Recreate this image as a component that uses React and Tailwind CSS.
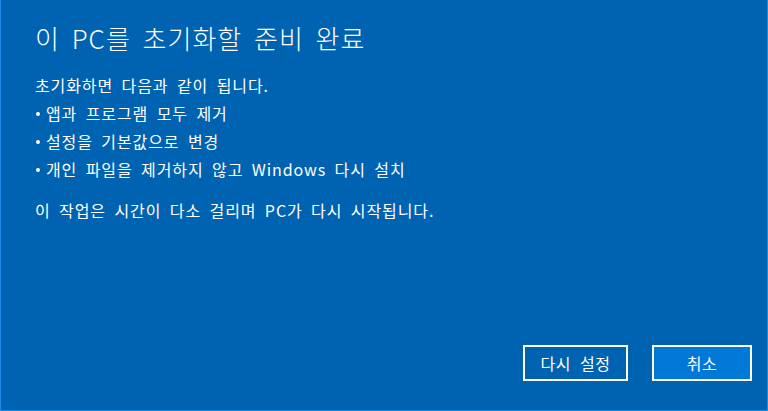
export default function App() {
  const items = [
    "앱과 프로그램 모두 제거",
    "설정을 기본값으로 변경",
    "개인 파일을 제거하지 않고 Windows 다시 설치",
  ];
  return (
    <div
      className="w-[768px] h-[411px] bg-[#0063b1] border-x border-b border-[#1e8ae6] flex flex-col text-white"
      style={{ fontFamily: '"Noto Sans CJK KR", "Noto Sans", sans-serif' }}
    >
      <div className="pl-[34px] pt-[20px] flex-1">
        <h1 className="text-[26px] font-light leading-[36px] tracking-[1px] [word-spacing:5px]">
          이 PC를 초기화할 준비 완료
        </h1>
        <div className="mt-[15px] text-[16px] leading-[28px] tracking-[0.9px] [word-spacing:4px]">
          <p>초기화하면 다음과 같이 됩니다.</p>
          <ul>
            {items.map((t) => (
              <li key={t} className="flex items-center">
                <span className="w-[11px] flex items-center">
                  <span className="block w-[4px] h-[4px] rounded-full bg-white ml-[1px] mt-[1px]" />
                </span>
                <span>{t}</span>
              </li>
            ))}
          </ul>
          <p className="mt-[13px]">이 작업은 시간이 다소 걸리며 PC가 다시 시작됩니다.</p>
        </div>
      </div>
      <div className="flex justify-end gap-[24px] pr-[15px] pb-[29px]">
        <button className="w-[105px] h-[36px] border-2 border-white text-[16px] tracking-[0.5px] [word-spacing:5px] text-white">
          다시 설정
        </button>
        <button className="w-[100px] h-[36px] border-2 border-white bg-[#0078d7] text-[16px] tracking-[0.5px] text-white">
          취소
        </button>
      </div>
    </div>
  );
}
